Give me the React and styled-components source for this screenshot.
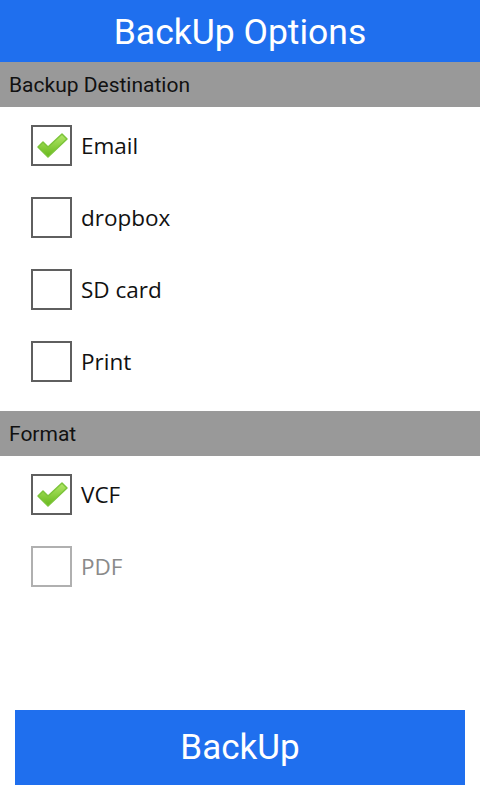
import React, { useState } from "react";
import styled, { createGlobalStyle } from "styled-components";

const GlobalStyle = createGlobalStyle`
  html, body {
    margin: 0;
    padding: 0;
    background: #fff;
    font-family: Roboto, "Liberation Sans", sans-serif;
  }
`;

const Page = styled.div`
  display: flex;
  flex-direction: column;
  width: 480px;
  min-height: 800px;
`;

const TitleBar = styled.div`
  height: 62px;
  background: #1f6fee;
  color: #fff;
  display: flex;
  align-items: center;
  justify-content: center;
  font-size: 35.5px;
  padding-top: 2px;
  box-sizing: border-box;
`;

const SectionHeader = styled.div`
  height: 45px;
  background: #999999;
  color: #111;
  font-size: 21px;
  display: flex;
  align-items: center;
  padding-left: 9px;
`;

const List = styled.div`
  display: flex;
  flex-direction: column;
  padding: ${(p) => p.pad || "2px 0 14px"};
`;

const Row = styled.label`
  height: 72px;
  display: flex;
  align-items: center;
  padding-left: 31px;
  gap: 9px;
  font-family: "Open Sans", Roboto, sans-serif;
  font-size: 22.5px;
  color: ${(p) => (p.disabled ? "#8a8a8a" : "#111")};
  cursor: ${(p) => (p.disabled ? "default" : "pointer")};
`;

const Box = styled.span`
  box-sizing: border-box;
  width: 41px;
  height: 41px;
  border: 2px solid ${(p) => (p.disabled ? "#b0b0b0" : "#5f5f5f")};
  background: #fff;
  display: flex;
  align-items: center;
  justify-content: center;
`;

const Footer = styled.div`
  margin-top: auto;
  padding: 0 15px 15px;
`;

const BigButton = styled.button`
  width: 100%;
  height: 75px;
  border: none;
  background: #1f6fee;
  color: #fff;
  font-family: inherit;
  font-size: 35px;
  cursor: pointer;
`;

const Check = () => (
  <svg width="34" height="30" viewBox="0 0 34 30">
    <defs>
      <linearGradient id="ck" x1="0" y1="0" x2="0" y2="1">
        <stop offset="0" stopColor="#b4e86a" />
        <stop offset="1" stopColor="#66b81a" />
      </linearGradient>
    </defs>
    <path
      d="M3 17 L8 12 L13 17 L27 4 L32 9 L13 27 Z"
      fill="url(#ck)"
      stroke="#7cc43a"
      strokeWidth="1.5"
      strokeLinejoin="round"
    />
  </svg>
);

const Option = ({ label, checked, disabled, onToggle }) => (
  <Row disabled={disabled} onClick={() => !disabled && onToggle()}>
    <Box disabled={disabled}>{checked && <Check />}</Box>
    {label}
  </Row>
);

export default function App() {
  const [dest, setDest] = useState({ Email: true, dropbox: false, "SD card": false, Print: false });
  const [fmt, setFmt] = useState({ VCF: true, PDF: false });

  return (
    <Page>
      <GlobalStyle />
      <TitleBar>BackUp Options</TitleBar>
      <SectionHeader>Backup Destination</SectionHeader>
      <List>
        {Object.keys(dest).map((k) => (
          <Option
            key={k}
            label={k}
            checked={dest[k]}
            onToggle={() => setDest({ ...dest, [k]: !dest[k] })}
          />
        ))}
      </List>
      <SectionHeader>Format</SectionHeader>
      <List pad="2px 0 0">
        <Option label="VCF" checked={fmt.VCF} onToggle={() => setFmt({ ...fmt, VCF: !fmt.VCF })} />
        <Option label="PDF" checked={fmt.PDF} disabled />
      </List>
      <Footer>
        <BigButton>BackUp</BigButton>
      </Footer>
    </Page>
  );
}
